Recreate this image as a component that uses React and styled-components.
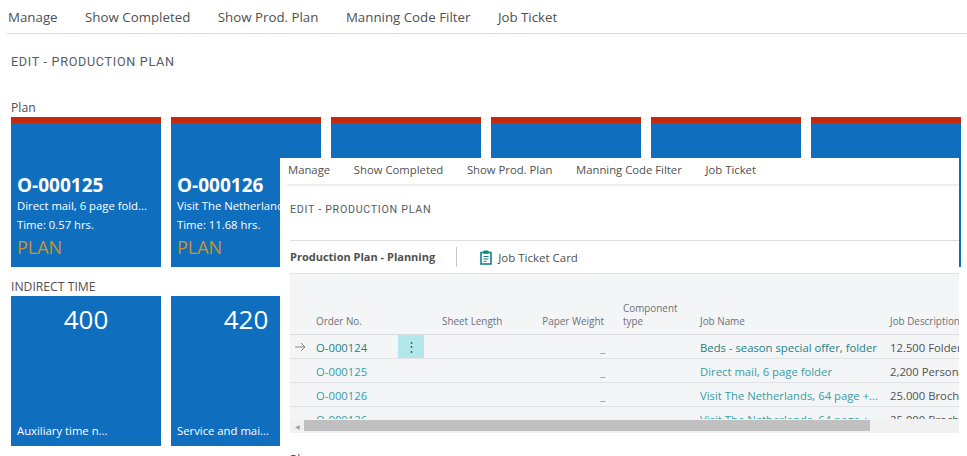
import React from "react";
import styled, { createGlobalStyle } from "styled-components";

const GlobalStyle = createGlobalStyle`
  html, body {
    margin: 0;
    padding: 0;
    height: 456px;
    overflow: hidden;
    background: #fff;
    font-family: "Open Sans", "Noto Sans", sans-serif;
  }
`;

const Page = styled.div`
  position: relative;
  width: 967px;
  height: 456px;
  overflow: hidden;
  background: #fff;
`;

const Menu = styled.div`
  display: flex;
  gap: ${props => props.$gap}px;
  height: ${props => props.$height}px;
  margin-left: ${props => props.$indent}px;
  padding: 0 0 ${props => props.$lift}px 1px;
  align-items: center;
  border-bottom: ${props => props.$line};
  font-size: ${props => props.$size}px;
  color: #505050;
  white-space: nowrap;
`;

const Title = styled.div`
  font-family: Roboto, sans-serif;
  font-weight: 400;
  font-size: ${props => props.$size}px;
  letter-spacing: 0.7px;
  color: #565c64;
  white-space: nowrap;
`;

const PageTitle = styled(Title)`
  margin: 20px 0 0 11px;
  line-height: 16px;
`;

const SectionLabel = styled.div`
  margin-left: 11px;
  font-size: 12.2px;
  line-height: 16px;
  color: #505050;
`;

const PlanLabel = styled(SectionLabel)`
  margin-top: 30px;
`;

const IndirectLabel = styled(SectionLabel)`
  margin-top: 12px;
`;

const TileRow = styled.div`
  display: flex;
  gap: 10px;
  margin: 1px 0 0 11px;
`;

const Tile = styled.div`
  flex: none;
  box-sizing: border-box;
  width: 150px;
  height: 150px;
  display: flex;
  flex-direction: column;
  padding: 0 6px 6px;
  background: #106ebe;
  color: #fff;
  border-top: ${props => (props.$flag ? "6px solid #c4290e" : "none")};
`;

const OrderNo = styled.div`
  margin-top: 51px;
  font-size: 19px;
  line-height: 22px;
  font-weight: 700;
`;

const TileLine = styled.div`
  font-size: 11.3px;
  line-height: 19px;
  white-space: nowrap;
  overflow: hidden;
`;

const Status = styled.div`
  margin-top: 1px;
  font-size: 18px;
  line-height: 24px;
  color: #c9952b;
`;

const Code = styled.div`
  margin-top: 5px;
  font-size: 26px;
  line-height: 36px;
  text-align: center;
`;

const Caption = styled(TileLine)`
  margin-top: auto;
  line-height: 18px;
`;

const Popup = styled.div`
  position: absolute;
  left: 280px;
  top: 158px;
  width: 679px;
  height: 298px;
  background: #fff;
`;

const PopupTitle = styled(Title)`
  margin: 17px 0 0 10px;
  line-height: 14px;
`;

const SubBar = styled.div`
  display: flex;
  align-items: center;
  height: 32px;
  margin: 23px 0 0 10px;
  border-top: 1px solid #dcdde0;
  border-bottom: 1px solid #e2e3e6;
  font-size: 11.5px;
  color: #505050;
`;

const SubTitle = styled.div`
  font-weight: 700;
  font-size: 11px;
  padding-right: 21px;
  line-height: 20px;
  border-right: 1px solid #c8c8c8;
  color: #505050;
`;

const CardAction = styled.div`
  display: flex;
  align-items: center;
  gap: 6px;
  margin-left: 23px;
`;

const Grid = styled.div`
  margin-left: 10px;
  height: 159px;
  background: #f4f5f7;
  overflow: hidden;
`;

const columns = "24px 84px 26px 98px 92px 78px 189px 120px";

const HeadRow = styled.div`
  display: grid;
  grid-template-columns: ${columns};
  height: 60px;
  border-bottom: 1px solid #dcdde0;
  font-size: 9.9px;
  color: #6d7179;
`;

const HeadCell = styled.div`
  align-self: end;
  padding: 0 ${props => (props.$right ? 10 : 0)}px 6px ${props => props.$pad || 0}px;
  line-height: 13px;
  white-space: nowrap;
  text-align: ${props => (props.$right ? "right" : "left")};
`;

const Rows = styled.div`
  height: 84px;
  overflow: hidden;
`;

const Row = styled.div`
  display: grid;
  grid-template-columns: ${columns};
  height: 23px;
  border-bottom: 1px solid #e0e1e4;
  font-size: 11.3px;
  line-height: 25px;
  color: #505050;
`;

const Cell = styled.div`
  height: 23px;
  padding-left: ${props => props.$pad || 0}px;
  white-space: nowrap;
  overflow: hidden;
`;

const LinkCell = styled(Cell)`
  color: ${props => (props.$active ? "#1f8085" : "#35a0a5")};
`;

const MarkCell = styled.div`
  display: flex;
  align-items: center;
  height: 23px;
  padding-left: 4px;
`;

const MenuCell = styled.div`
  display: flex;
  align-items: center;
  justify-content: center;
  height: 23px;
  background: ${props => (props.$active ? "#b2e8ea" : "transparent")};
  color: #4a5a5c;
  font-size: 13px;
`;

const Blank = styled.div`
  height: 23px;
  text-align: right;
  padding-right: 9px;
  color: #4f9a9e;
`;

const Scrollbar = styled.div`
  display: flex;
  height: 15px;
  background: #f1f1f1;
`;

const ScrollButton = styled.div`
  width: 14px;
  display: flex;
  align-items: center;
  justify-content: center;
  font-size: 6px;
  color: #a0a0a0;
`;

const ScrollThumb = styled.div`
  width: 566px;
  height: 11px;
  margin-top: 1px;
  background: #c0c0c0;
`;

const NextSection = styled.div`
  margin: 19px 0 0 10px;
  font-size: 12px;
  line-height: 16px;
  color: #505050;
`;

const menuItems = ["Manage", "Show Completed", "Show Prod. Plan", "Manning Code Filter", "Job Ticket"];

const planTiles = [
  { no: "O-000125", text: "Direct mail, 6 page fold...", time: "Time: 0.57 hrs." },
  { no: "O-000126", text: "Visit The Netherlands, 64...", time: "Time: 11.68 hrs." },
  {},
  {},
  {},
  {},
];

const indirectTiles = [
  { code: "400", text: "Auxiliary time n..." },
  { code: "420", text: "Service and mai..." },
];

const rows = [
  { no: "O-000124", job: "Beds - season special offer, folder", desc: "12.500 Folders, 4 colours", active: true },
  { no: "O-000125", job: "Direct mail, 6 page folder", desc: "2,200 Personal letters" },
  { no: "O-000126", job: "Visit The Netherlands, 64 page +...", desc: "25.000 Brochures" },
  { no: "O-000126", job: "Visit The Netherlands, 64 page +...", desc: "25.000 Brochures" },
];

function ClipboardIcon() {
  return (
    <svg width="12" height="15" viewBox="0 0 12 15" fill="none">
      <rect x="1" y="2.5" width="10" height="11.5" fill="none" stroke="#14808a" strokeWidth="1.6" />
      <rect x="3.5" y="0.5" width="5" height="3.2" fill="#14808a" />
      <path d="M3.5 6.5h5M3.5 9h5M3.5 11.3h3" stroke="#14808a" strokeWidth="1" />
    </svg>
  );
}

function ArrowIcon() {
  return (
    <svg width="12" height="10" viewBox="0 0 12 10" fill="none">
      <path d="M1 5h10M7 1l4 4-4 4" stroke="#7a7a7a" strokeWidth="0.9" />
    </svg>
  );
}

export default function App() {
  return (
    <Page>
      <GlobalStyle />
      <Menu $gap={27.5} $height={33} $lift={0} $indent={7} $size={13.3} $line="1px solid #d8d8d8">
        {menuItems.map(item => (
          <span key={item}>{item}</span>
        ))}
      </Menu>
      <PageTitle $size={12.6}>EDIT - PRODUCTION PLAN</PageTitle>
      <PlanLabel>Plan</PlanLabel>
      <TileRow>
        {planTiles.map((tile, i) => (
          <Tile key={i} $flag>
            {tile.no && (
              <>
                <OrderNo>{tile.no}</OrderNo>
                <TileLine>{tile.text}</TileLine>
                <TileLine>{tile.time}</TileLine>
                <Status>PLAN</Status>
              </>
            )}
          </Tile>
        ))}
      </TileRow>
      <IndirectLabel>INDIRECT TIME</IndirectLabel>
      <TileRow>
        {indirectTiles.map(tile => (
          <Tile key={tile.code}>
            <Code>{tile.code}</Code>
            <Caption>{tile.text}</Caption>
          </Tile>
        ))}
      </TileRow>

      <Popup>
        <Menu $gap={23.7} $height={23} $lift={3} $indent={7} $size={11.3} $line="2px solid #eeeeee">
          {menuItems.map(item => (
            <span key={item}>{item}</span>
          ))}
        </Menu>
        <PopupTitle $size={10.7}>EDIT - PRODUCTION PLAN</PopupTitle>
        <SubBar>
          <SubTitle>Production Plan - Planning</SubTitle>
          <CardAction>
            <ClipboardIcon />
            Job Ticket Card
          </CardAction>
        </SubBar>
        <Grid>
          <HeadRow>
            <HeadCell />
            <HeadCell $pad={2}>Order No.</HeadCell>
            <HeadCell />
            <HeadCell $pad={18}>Sheet Length</HeadCell>
            <HeadCell $right>Paper Weight</HeadCell>
            <HeadCell $pad={9}>
              Component
              <br />
              type
            </HeadCell>
            <HeadCell $pad={8}>Job Name</HeadCell>
            <HeadCell $pad={9}>Job Description</HeadCell>
          </HeadRow>
          <Rows>
            {rows.map((row, i) => (
              <Row key={i}>
                <MarkCell>{row.active && <ArrowIcon />}</MarkCell>
                <LinkCell $pad={2} $active={row.active}>{row.no}</LinkCell>
                <MenuCell $active={row.active}>{row.active && "⋮"}</MenuCell>
                <Cell />
                <Blank>_</Blank>
                <Cell />
                <LinkCell $pad={8} $active={row.active}>{row.job}</LinkCell>
                <Cell $pad={9}>{row.desc}</Cell>
              </Row>
            ))}
          </Rows>
          <Scrollbar>
            <ScrollButton>◀</ScrollButton>
            <ScrollThumb />
          </Scrollbar>
        </Grid>
        <NextSection>Plan</NextSection>
      </Popup>
    </Page>
  );
}
